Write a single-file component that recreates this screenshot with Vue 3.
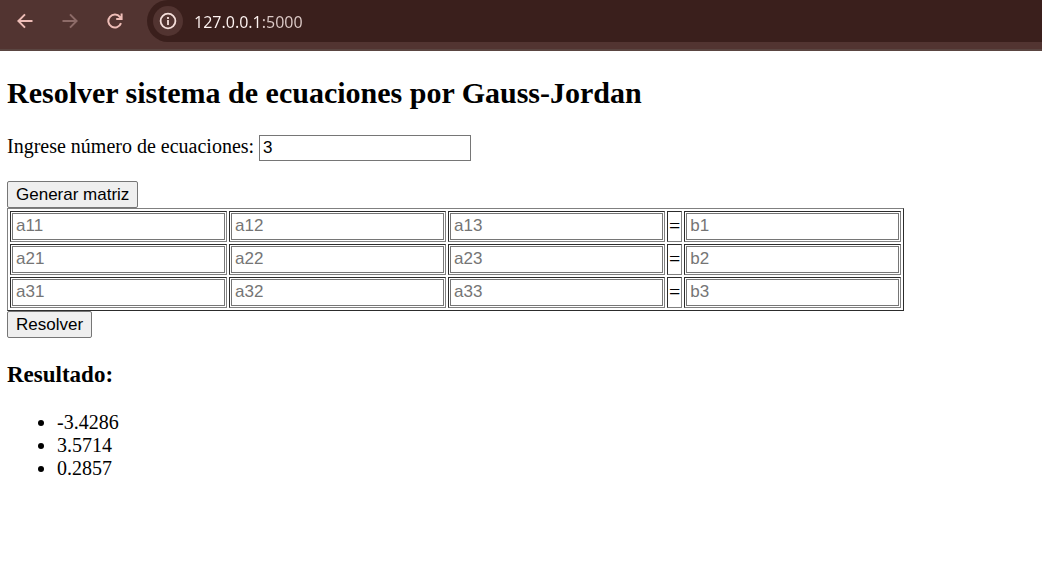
<script setup>
import { computed, ref } from 'vue'

const address = ref('127.0.0.1:5000')
const count = ref('3')
const size = ref(3)
const coefficients = ref({})
const results = ref(['-3.4286', '3.5714', '0.2857'])

const rows = computed(() =>
  Array.from({ length: size.value }, (_, r) => ({
    id: r + 1,
    cells: Array.from({ length: size.value }, (_, c) => `a${r + 1}${c + 1}`),
    constant: `b${r + 1}`,
  })),
)

function generate() {
  const n = Number(count.value)
  if (Number.isInteger(n) && n > 0) size.value = n
}

function solve() {
  const n = size.value
  const m = rows.value.map((row) =>
    [...row.cells, row.constant].map((key) => Number(coefficients.value[key])),
  )
  if (m.flat().some(Number.isNaN)) return
  for (let i = 0; i < n; i++) {
    const p = m.findIndex((row, k) => k >= i && row[i] !== 0)
    if (p < 0) return
    ;[m[i], m[p]] = [m[p], m[i]]
    const pivot = m[i][i]
    m[i] = m[i].map((v) => v / pivot)
    for (let k = 0; k < n; k++) {
      if (k === i) continue
      const f = m[k][i]
      m[k] = m[k].map((v, j) => v - f * m[i][j])
    }
  }
  results.value = m.map((row) => row[n].toFixed(4))
}
</script>

<template>
  <header class="toolbar">
    <nav class="nav" aria-label="Navegación">
      <button type="button" class="nav-button" aria-label="Atrás">
        <svg viewBox="0 0 16 16" width="16" height="16"><path d="M15.5 8H1.8M8 1.4 1.4 8 8 14.6" /></svg>
      </button>
      <button type="button" class="nav-button dim" aria-label="Adelante">
        <svg viewBox="0 0 16 16" width="16" height="16"><path d="M.5 8h13.7M8 1.4 14.6 8 8 14.6" /></svg>
      </button>
      <button type="button" class="nav-button" aria-label="Recargar">
        <svg viewBox="0 0 16 16" width="16" height="16"><path d="M14 10.2A6.5 6.5 0 1 1 13 4.1L14.4 5.7M14.6.6V6H9.2" /></svg>
      </button>
    </nav>
    <div class="address">
      <button type="button" class="info" aria-label="Información del sitio">
        <svg viewBox="0 0 18 18" width="18" height="18">
          <circle cx="9" cy="9" r="7.4" />
          <path d="M9 8v5M9 5v2" />
        </svg>
      </button>
      <input v-model="address" class="url" type="text" aria-label="Dirección" />
    </div>
  </header>

  <main class="page">
    <h2>Resolver sistema de ecuaciones por Gauss-Jordan</h2>

    <form @submit.prevent="generate">
      <div class="field">
        <label for="count">Ingrese número de ecuaciones:</label>
        <input id="count" v-model="count" class="box count" type="text" />
      </div>
      <button type="submit" class="action">Generar matriz</button>
    </form>

    <form @submit.prevent="solve">
      <table>
        <tbody>
          <tr v-for="row in rows" :key="row.id">
            <td v-for="cell in row.cells" :key="cell">
              <input v-model="coefficients[cell]" class="box" type="text" :placeholder="cell" :aria-label="cell" />
            </td>
            <td>=</td>
            <td>
              <input v-model="coefficients[row.constant]" class="box" type="text" :placeholder="row.constant" :aria-label="row.constant" />
            </td>
          </tr>
        </tbody>
      </table>
      <button type="submit" class="action">Resolver</button>
    </form>

    <h3>Resultado:</h3>
    <ul>
      <li v-for="(value, i) in results" :key="i">{{ value }}</li>
    </ul>
  </main>
</template>

<style>
body {
  background: #fff;
}
</style>

<style scoped>
.toolbar {
  display: flex;
  align-items: flex-start;
  background: #523431;
  border-bottom: 2px solid #5a4541;
  padding-bottom: 7px;
}
.nav {
  display: flex;
  align-items: center;
  gap: 13px;
  height: 42px;
  padding: 0 16px 0 9px;
}
.nav-button {
  display: grid;
  place-items: center;
  width: 32px;
  height: 32px;
  padding: 0;
  border: 0;
  background: none;
  color: #eebdb7;
}
.nav-button.dim {
  color: #8d6b68;
}
svg {
  fill: none;
  stroke: currentColor;
  stroke-width: 2;
}
.info svg {
  stroke-width: 1.8;
}
.address {
  display: flex;
  flex: 1;
  align-items: center;
  gap: 11px;
  height: 42px;
  padding-left: 6px;
  border-radius: 21px 0 0 21px;
  background: #3a1f1c;
}
.info {
  display: grid;
  place-items: center;
  width: 30px;
  height: 30px;
  padding: 0;
  border: 0;
  border-radius: 50%;
  background: #523431;
  color: #f5dfdb;
}
.url {
  flex: 1;
  min-width: 0;
  height: 32px;
  padding: 2px 0 0;
  box-sizing: border-box;
  border: 0;
  outline: 0;
  background: linear-gradient(90deg, #fff4f2 67px, #dccac7 67px);
  -webkit-background-clip: text;
  background-clip: text;
  color: transparent;
  font: 16px/30px "Noto Sans", "Open Sans", sans-serif;
}
.page {
  padding: 25px 7px;
  color: #000;
  font: 20px/23px "Liberation Serif", "Times New Roman", serif;
}
h2 {
  margin: 0 0 25px;
  font-size: 30px;
  line-height: 34px;
}
h3 {
  margin: 24px 0 23px;
  font-size: 23px;
  line-height: 26px;
}
.field {
  display: flex;
  align-items: flex-start;
  gap: 5px;
  margin-bottom: 20px;
}
.box {
  display: block;
  box-sizing: border-box;
  width: 213px;
  height: 27px;
  padding: 1px 3px 2px;
  border: 1px solid #767676;
  border-radius: 0;
  background: #fff;
  color: #000;
  font: 17px "Liberation Sans", Arial, sans-serif;
}
.box.count {
  width: 212px;
  height: 26px;
}
.box::placeholder {
  color: #757575;
}
.action {
  display: block;
  box-sizing: border-box;
  height: 27px;
  padding: 0 8px;
  border: 1px solid #767676;
  border-radius: 2px;
  background: #efefef;
  color: #000;
  font: 17px "Liberation Sans", Arial, sans-serif;
}
table {
  border: 1px solid;
  border-color: #808080 #2c2c2c #2c2c2c #808080;
  border-collapse: separate;
  border-spacing: 2px;
}
td {
  padding: 1px;
  border: 1px solid;
  border-color: #2c2c2c #808080 #808080 #2c2c2c;
}
ul {
  margin: 0;
  padding-left: 50px;
}
</style>
